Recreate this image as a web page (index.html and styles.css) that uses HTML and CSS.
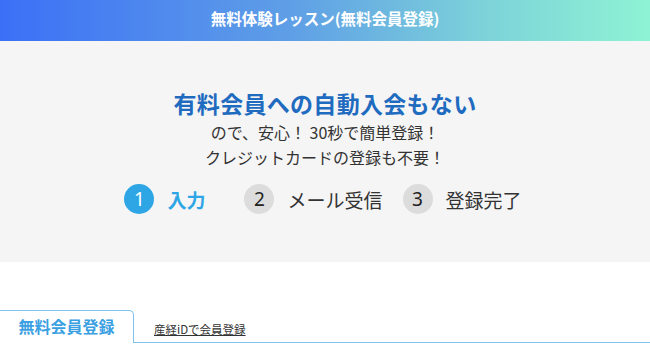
FILE: index.html
```html
<!DOCTYPE html>
<html lang="ja">
<head>
<meta charset="utf-8">
<link rel="stylesheet" href="styles.css">
</head>
<body>
<header class="topbar">無料体験レッスン(無料会員登録)</header>
<section class="hero">
  <h1 class="hero-title">有料会員への自動入会もない</h1>
  <p class="hero-sub">ので、安心！ 30秒で簡単登録！<br>クレジットカードの登録も不要！</p>
  <ol class="steps">
    <li class="step step-active step-first"><span class="step-num">1</span><span class="step-label">入力</span></li>
    <li class="step step-second"><span class="step-num">2</span><span class="step-label">メール受信</span></li>
    <li class="step"><span class="step-num">3</span><span class="step-label">登録完了</span></li>
  </ol>
</section>
<nav class="tabs">
  <div class="tab tab-current">無料会員登録</div>
  <div class="tab-rest"><a class="tab-link" href="#">産経iDで会員登録</a></div>
</nav>
</body>
</html>
```
FILE: styles.css
```css
* { box-sizing: border-box; }
html, body { margin: 0; padding: 0; background: #fff; }
body {
  font-family: "Noto Sans CJK JP", "Noto Sans", sans-serif;
  color: #333;
  width: 650px;
  overflow: hidden;
}
.topbar {
  height: 41px;
  background: linear-gradient(90deg, #3b70f6 0%, #5f9fe6 45%, #7dd3d9 75%, #8ef3d4 100%);
  color: #fff;
  font-weight: bold;
  font-size: 15.5px;
  line-height: 36px;
  text-align: center;
}
.hero {
  background: #f5f5f5;
  height: 221px;
  padding-top: 47px;
  text-align: center;
}
.hero-title {
  margin: 0;
  font-size: 23px;
  line-height: 30px;
  font-weight: bold;
  color: #1f6bc0;
  letter-spacing: 0.3px;
}
.hero-sub {
  margin: 2px 0 0;
  font-size: 16px;
  line-height: 25px;
  color: #333;
}
.steps {
  list-style: none;
  margin: 14px 0 0;
  padding: 0 4px 0 0;
  display: flex;
  justify-content: center;
  align-items: center;
}
.step {
  display: flex;
  align-items: center;
  gap: 13px;
  font-size: 19px;
  color: #333;
}
.step-first { margin-right: 39px; }
.step-second { margin-right: 20px; }
.step-num {
  width: 30px;
  height: 30px;
  border-radius: 50%;
  background: #dcdcdc;
  color: #222;
  font-family: "Noto Sans", sans-serif;
  font-size: 19px;
  line-height: 30px;
  text-align: center;
}
.step-active .step-num { background: #2ea6e6; color: #fff; }
.step-active .step-label { color: #2ea6e6; font-weight: bold; }
.tabs {
  display: flex;
  align-items: flex-end;
  margin-top: 48px;
  height: 33px;
}
.tab-current {
  width: 135px;
  height: 33px;
  margin-left: -1px;
  border: 1px solid #7ec2ef;
  border-bottom: none;
  border-radius: 0 5px 0 0;
  text-align: center;
  font-size: 16px;
  font-weight: bold;
  color: #3aa0e2;
  line-height: 31px;
}
.tab-rest {
  flex: 1;
  height: 33px;
  border-bottom: 1px solid #7ec2ef;
  padding-left: 20px;
  font-size: 11.5px;
  line-height: 38px;
}
.tab-link { color: #333; text-decoration: underline; }
```
